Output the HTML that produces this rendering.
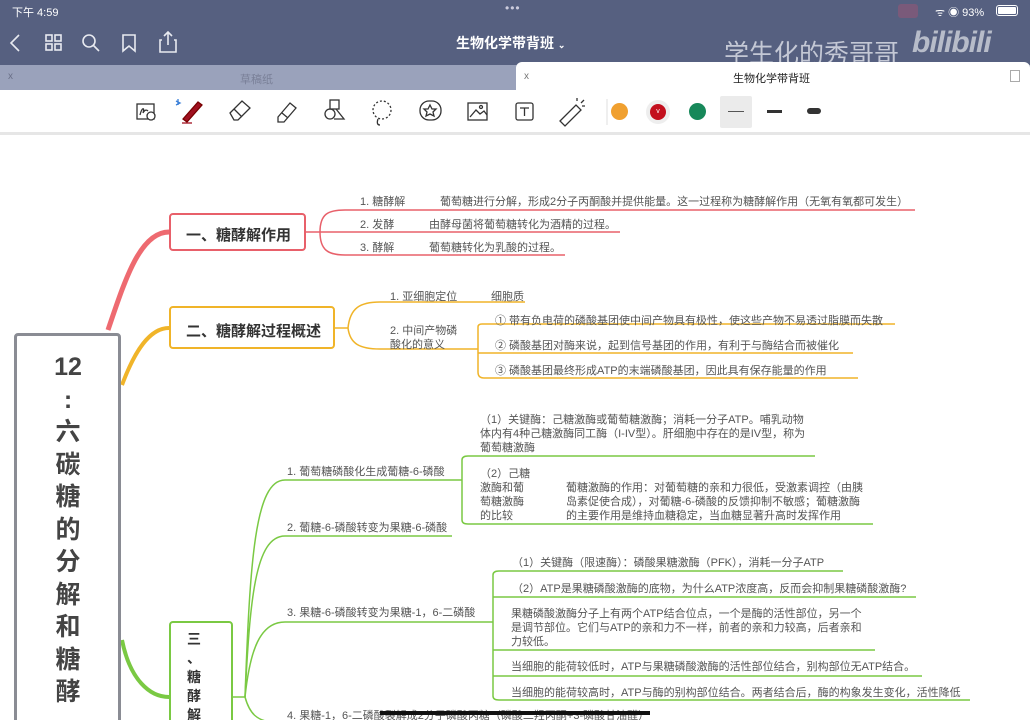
<!DOCTYPE html>
<html style="overflow:hidden;height:720px"><head><meta charset="utf-8"><style>
*{margin:0;padding:0;box-sizing:border-box}
body{width:1030px;height:720px;overflow:hidden;background:#fff;position:relative;font-family:"Liberation Sans","Noto Sans CJK SC",sans-serif;color:#555}
.a{position:absolute;white-space:nowrap}
.t{font-size:11px;color:#555;line-height:14px}
.hd{position:absolute;left:0;top:0;width:1030px;height:65px;background:#566080}
.box{position:absolute;border-radius:4px;background:#fff}
</style></head><body>
<div class="hd"></div>
<div class="a" style="left:12px;top:4px;font-size:11px;color:#fff">下午 4:59</div>
<div class="a" style="left:505px;top:1px;font-size:12px;color:#ccd;letter-spacing:1px">•••</div>
<div class="a" style="left:898px;top:4px;width:20px;height:14px;background:#7a5a7a;border-radius:3px"></div>
<div class="a" style="left:935px;top:4px;font-size:11px;color:#fff">ᯤ ◉ 93%</div>
<div class="a" style="left:996px;top:5px;width:22px;height:11px;border:1px solid #fff;border-radius:3px;padding:1px"><div style="width:100%;height:100%;background:#fff;border-radius:1px"></div></div>
<svg class="a" style="left:0;top:28px" width="190" height="30" fill="none" stroke="#e8eaf0" stroke-width="1.6">
<path d="M19 7 L11 15 L19 23"/>
<rect x="46" y="7" width="6" height="6"/><rect x="55" y="7" width="6" height="6"/><rect x="46" y="16" width="6" height="6"/><rect x="55" y="16" width="6" height="6"/>
<circle cx="89" cy="13" r="6"/><path d="M93 17 L99 23"/>
<path d="M123 7 H135 V23 L129 18 L123 23 Z"/>
<path d="M162 12 H160 V24 H176 V12 H174 M168 4 V17 M164 8 L168 4 L172 8"/>
</svg>
<div class="a" style="left:456px;top:33px;font-size:14px;color:#fff;font-weight:bold">生物化学带背班 <span style="font-size:9px">⌄</span></div>
<div class="a" style="left:724px;top:34px;font-size:25px;color:#d8dbe4;opacity:.85">学生化的秀哥哥</div>
<div class="a" style="left:912px;top:26px;font-size:30px;color:#d0d3dc;font-weight:bold;font-style:italic;opacity:.8;letter-spacing:-1px">bilibili</div>
<div class="a" style="left:0;top:65px;width:1030px;height:25px;background:#9aa2bb"></div>
<div class="a" style="left:8px;top:71px;font-size:10px;color:#6a7088">x</div>
<div class="a" style="left:240px;top:71px;font-size:11px;color:#7a8098">草稿纸</div>
<div class="a" style="left:516px;top:62px;width:514px;height:30px;background:#fff;border-radius:6px 6px 0 0"></div>
<div class="a" style="left:524px;top:71px;font-size:10px;color:#777">x</div>
<div class="a" style="left:733px;top:70px;font-size:11px;color:#222">生物化学带背班</div>
<div class="a" style="left:1010px;top:70px;width:10px;height:12px;border:1px solid #aaa"></div>
<div class="a" style="left:0;top:90px;width:1030px;height:42px;background:#fff"></div>
<div class="a" style="left:0;top:132px;width:1030px;height:3px;background:#e6e6e6"></div>
<svg class="a" style="left:130px;top:95px" width="720" height="34" fill="none" stroke="#333" stroke-width="1.3">
<rect x="7" y="9" width="17" height="15"/><path d="M10 20 C12 12 15 12 13 18 C15 14 17 15 18 16"/><circle cx="21" cy="21" r="4" fill="#fff"/>
<path d="M48 4 V10 M46 6 L50 8 L46 10" stroke="#3a7fd8"/>
<path d="M53 24 L68 7 L72 10 L57 27 Z" fill="#a01020" stroke="#700"/><path d="M52 28 H62" stroke="#a01020"/>
<path d="M100 18 L112 6 L120 13 L108 25 H104 Z M104 14 L112 22"/>
<path d="M148 22 L160 8 L166 13 L154 27 H148 Z M152 18 L158 23"/>
<rect x="200" y="5" width="9" height="9"/><circle cx="200" cy="19" r="5"/><path d="M206 14 L214 24 H204"/>
<circle cx="252" cy="15" r="9" stroke-dasharray="2 2"/><path d="M248 24 Q246 30 250 30"/>
<rect x="290" y="6" width="21" height="19" rx="9"/><path d="M300 10 L302 14 L306 14 L303 17 L304 21 L300 19 L296 21 L297 17 L294 14 L298 14 Z"/>
<rect x="338" y="8" width="19" height="17"/><path d="M340 22 L346 15 L350 19 L354 16 L357 20"/><circle cx="351" cy="12" r="1.5"/>
<rect x="386" y="8" width="17" height="17" rx="2"/><path d="M390 13 H399 M394.5 13 V21"/>
<path d="M430 26 L446 10 L451 15 L435 31 Z M447 6 V3 M451 8 L454 5 M452 11 H455"/>
<path d="M477 4 V30" stroke="#e6e6e6"/>
</svg>
<div class="a" style="left:611px;top:103px;width:17px;height:17px;border-radius:50%;background:#f0a030"></div>
<div class="a" style="left:646px;top:100px;width:24px;height:24px;border-radius:50%;background:#eee"></div>
<div class="a" style="left:650px;top:104px;width:16px;height:16px;border-radius:50%;background:#c3101e;color:#fff;font-size:7px;text-align:center;line-height:16px">v</div>
<div class="a" style="left:689px;top:103px;width:17px;height:17px;border-radius:50%;background:#17885a"></div>
<div class="a" style="left:720px;top:96px;width:32px;height:32px;background:#ebebeb;border-radius:2px"></div>
<div class="a" style="left:728px;top:111px;width:16px;height:1px;background:#555"></div>
<div class="a" style="left:767px;top:110px;width:15px;height:3px;background:#333"></div>
<div class="a" style="left:807px;top:108px;width:14px;height:6px;background:#333;border-radius:3px"></div>

<svg class="a" style="left:0;top:0" width="1030" height="720" fill="none" stroke-width="1.5">
<path d="M108 330 C125 280 140 232 169 232" stroke="#ee6a70" stroke-width="5"/>
<path d="M122 385 C135 350 150 328 169 328" stroke="#f0b429" stroke-width="4"/>
<path d="M122 640 C130 680 150 697 169 697" stroke="#7ac943" stroke-width="4"/>
<g stroke="#e8606a"><path d="M306 232 H320"/><path d="M320 232 C320 214 328 210 345 210 H915"/><path d="M320 232 H620"/><path d="M320 232 C320 250 328 255 345 255 H565"/></g>
<g stroke="#f0b429"><path d="M335 328 H348"/><path d="M348 328 C350 308 360 302 380 302 H525"/><path d="M348 328 C350 344 360 349 380 349 H478"/>
<path d="M478 349 V327 Q478 324 482 324 H895 M478 349 V353 H853 M478 349 V372 Q478 378 484 378 H858"/></g>
<g stroke="#7ac943"><path d="M233 697 H245"/>
<path d="M245 697 C250 560 255 480 285 480 H462"/>
<path d="M245 697 C250 600 255 536 285 536 H452"/>
<path d="M245 697 C250 650 260 622 285 622 H493"/>
<path d="M245 697 C250 715 258 720 270 722"/>
<path d="M462 480 V460 Q462 456 468 456 H815 M462 480 V520 Q462 524 468 524 H873"/>
<path d="M493 622 V575 Q493 571 499 571 H843 M493 597 H916 M493 650 H875 M493 676 H922 M493 622 V696 Q493 700 499 700 H970"/></g>
</svg>

<div class="box" style="left:14px;top:333px;width:107px;height:400px;border:3px solid #8a8c94"></div>
<div class="a" style="left:50px;top:351px;width:36px;text-align:center;font-size:25px;font-weight:bold;color:#444;line-height:32.5px;white-space:normal">12<br>:<br>六<br>碳<br>糖<br>的<br>分<br>解<br>和<br>糖<br>酵</div>

<div class="box" style="left:169px;top:213px;width:137px;height:38px;border:2px solid #e8606a"></div>
<div class="a" style="left:186px;top:224px;font-size:15px;font-weight:bold;color:#333">一、糖酵解作用</div>
<div class="a t" style="left:360px;top:195px">1. 糖酵解</div><div class="a t" style="left:440px;top:195px">葡萄糖进行分解，形成2分子丙酮酸并提供能量。这一过程称为糖酵解作用（无氧有氧都可发生）</div>
<div class="a t" style="left:360px;top:218px">2. 发酵</div><div class="a t" style="left:429px;top:218px">由酵母菌将葡萄糖转化为酒精的过程。</div>
<div class="a t" style="left:360px;top:241px">3. 酵解</div><div class="a t" style="left:429px;top:241px">葡萄糖转化为乳酸的过程。</div>

<div class="box" style="left:169px;top:306px;width:166px;height:43px;border:2px solid #f0b429"></div>
<div class="a" style="left:186px;top:320px;font-size:15px;font-weight:bold;color:#333">二、糖酵解过程概述</div>
<div class="a t" style="left:390px;top:290px">1. 亚细胞定位</div><div class="a t" style="left:491px;top:290px">细胞质</div>
<div class="a t" style="left:390px;top:324px">2. 中间产物磷<br>酸化的意义</div>
<div class="a t" style="left:495px;top:314px">① 带有负电荷的磷酸基团使中间产物具有极性，使这些产物不易透过脂膜而失散</div>
<div class="a t" style="left:495px;top:339px">② 磷酸基团对酶来说，起到信号基团的作用，有利于与酶结合而被催化</div>
<div class="a t" style="left:495px;top:364px">③ 磷酸基团最终形成ATP的末端磷酸基团，因此具有保存能量的作用</div>

<div class="box" style="left:169px;top:621px;width:64px;height:120px;border:2px solid #7ac943"></div>
<div class="a" style="left:185px;top:630px;font-size:14px;font-weight:bold;color:#333;line-height:19px;text-align:center;width:18px;white-space:normal">三<br>、<br>糖<br>酵<br>解</div>

<div class="a t" style="left:287px;top:465px">1. 葡萄糖磷酸化生成葡糖-6-磷酸</div>
<div class="a t" style="left:287px;top:521px">2. 葡糖-6-磷酸转变为果糖-6-磷酸</div>
<div class="a t" style="left:287px;top:606px">3. 果糖-6-磷酸转变为果糖-1，6-二磷酸</div>
<div class="a t" style="left:287px;top:709px">4. 果糖-1，6-二磷酸裂解成2分子磷酸丙糖（磷酸二羟丙酮+3-磷酸甘油醛）</div>
<div class="a" style="left:380px;top:711px;width:270px;height:4px;background:#111"></div>

<div class="a t" style="left:480px;top:413px">（1）关键酶：己糖激酶或葡萄糖激酶；消耗一分子ATP。哺乳动物<br>体内有4种己糖激酶同工酶（I-IV型）。肝细胞中存在的是IV型，称为<br>葡萄糖激酶</div>
<div class="a t" style="left:480px;top:467px">（2）己糖<br>激酶和葡<br>萄糖激酶<br>的比较</div>
<div class="a t" style="left:566px;top:481px">葡糖激酶的作用：对葡萄糖的亲和力很低，受激素调控（由胰<br>岛素促使合成），对葡糖-6-磷酸的反馈抑制不敏感；葡糖激酶<br>的主要作用是维持血糖稳定，当血糖显著升高时发挥作用</div>

<div class="a t" style="left:512px;top:556px">（1）关键酶（限速酶）：磷酸果糖激酶（PFK），消耗一分子ATP</div>
<div class="a t" style="left:512px;top:582px">（2）ATP是果糖磷酸激酶的底物，为什么ATP浓度高，反而会抑制果糖磷酸激酶?</div>
<div class="a t" style="left:511px;top:607px">果糖磷酸激酶分子上有两个ATP结合位点，一个是酶的活性部位，另一个<br>是调节部位。它们与ATP的亲和力不一样，前者的亲和力较高，后者亲和<br>力较低。</div>
<div class="a t" style="left:511px;top:660px">当细胞的能荷较低时，ATP与果糖磷酸激酶的活性部位结合，别构部位无ATP结合。</div>
<div class="a t" style="left:511px;top:686px">当细胞的能荷较高时，ATP与酶的别构部位结合。两者结合后，酶的构象发生变化，活性降低</div>
</body></html>
